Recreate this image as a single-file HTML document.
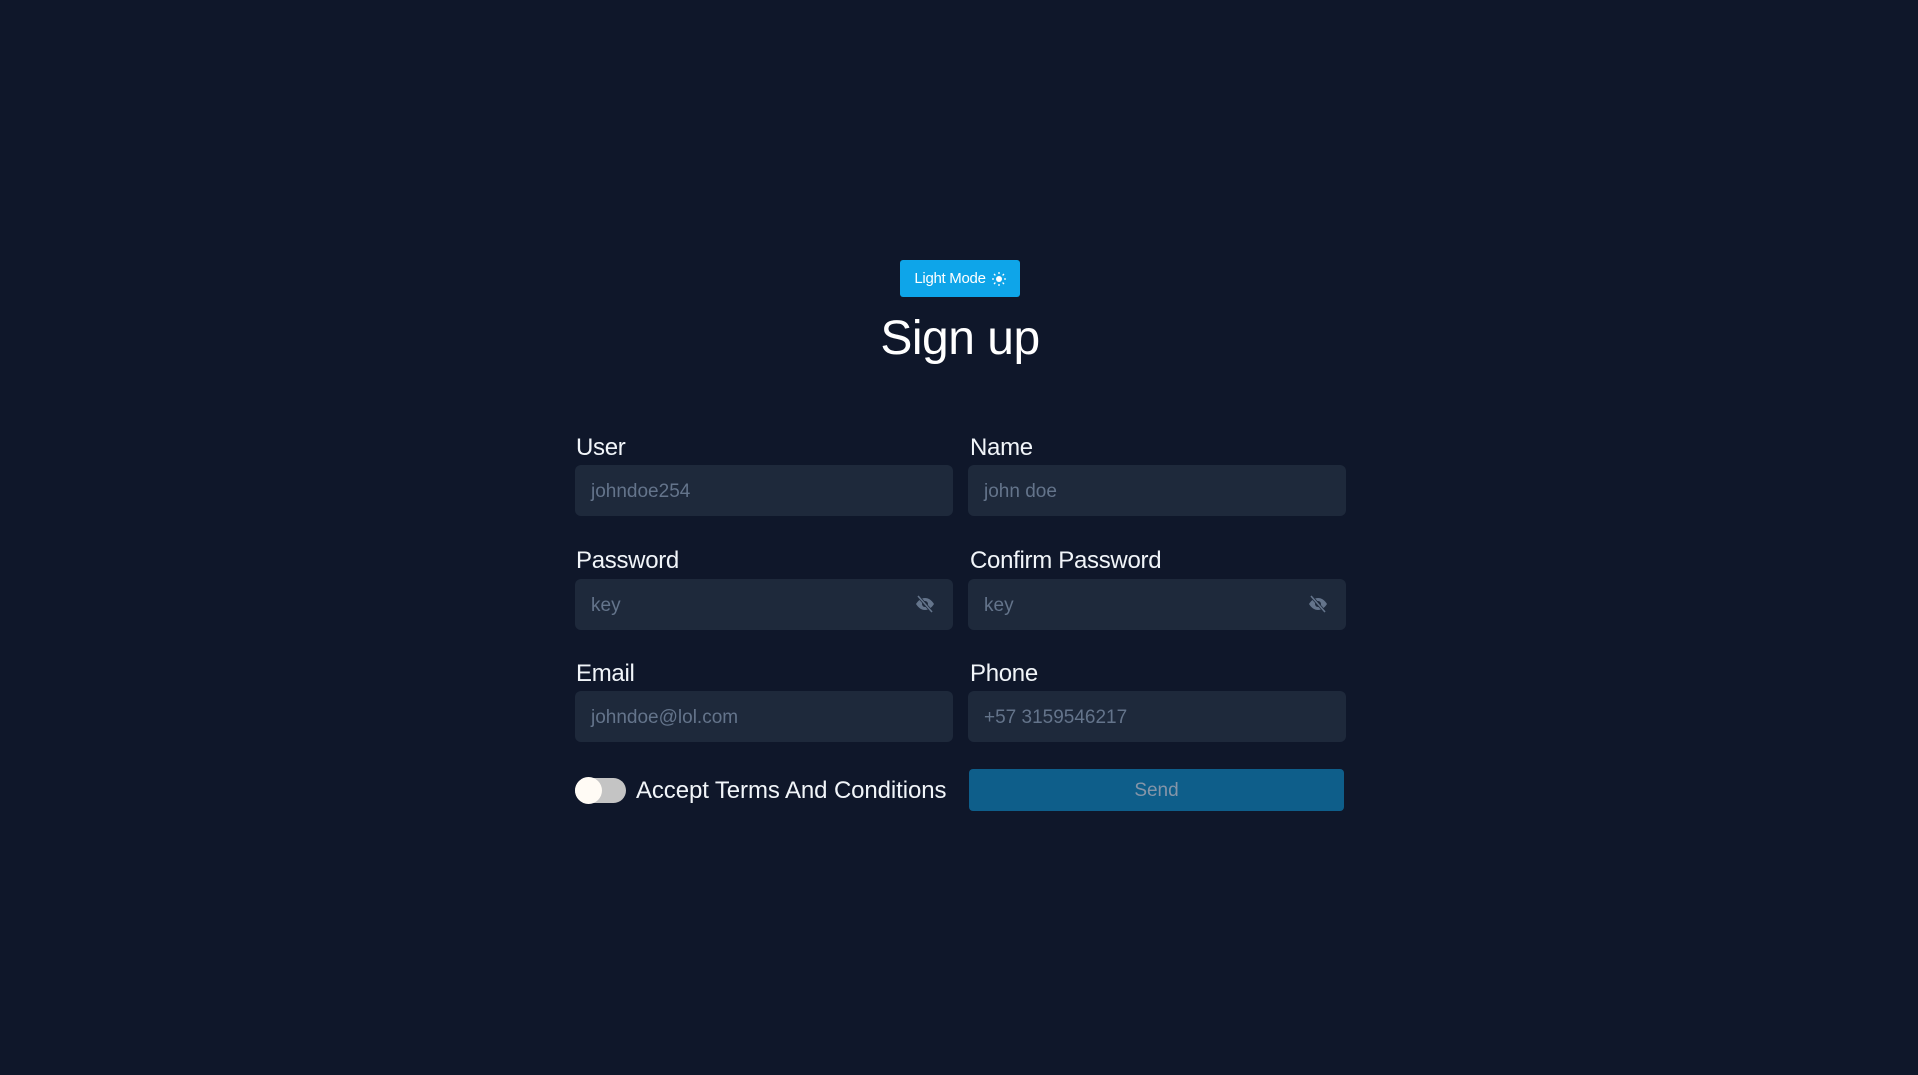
<!DOCTYPE html>
<html><head><meta charset="utf-8"><style>
*{box-sizing:border-box;margin:0;padding:0}
body{width:1918px;height:1075px;background:#0f172a;font-family:"Liberation Sans",sans-serif;position:relative;overflow:hidden;color:#fff}
.abs{position:absolute}
.btn{left:900px;top:260px;width:120px;height:37px;background:#0ea5e9;border-radius:3px;color:#fff;font-size:15px;display:flex;align-items:center;justify-content:center;gap:6px;letter-spacing:-0.3px}
h1{position:absolute;left:0;width:1920px;text-align:center;top:311px;font-size:48px;font-weight:normal;letter-spacing:-0.5px}
.lbl{font-size:24px;color:#f1f5f9;letter-spacing:-0.3px}
.in{background:#1e293b;border-radius:6px;width:378px;height:51px;color:#64748b;font-size:19px;padding-left:16px;display:flex;align-items:center;padding-top:2px}
.eye{position:absolute;right:18px;top:16px}
</style></head><body>
<div class="abs btn">Light Mode <svg width="14" height="14" viewBox="0 0 14 14"><circle cx="7" cy="7" r="3" fill="#fff"/><g stroke="#fff" stroke-width="1.3"><path d="M7 0v2M7 12v2M0 7h2M12 7h2M2 2l1.4 1.4M10.6 10.6L12 12M2 12l1.4-1.4M10.6 3.4L12 2"/></g></svg></div>
<h1>Sign up</h1>
<div class="abs lbl" style="left:576px;top:434px">User</div>
<div class="abs lbl" style="left:970px;top:434px">Name</div>
<div class="abs in" style="left:575px;top:465px">johndoe254</div>
<div class="abs in" style="left:968px;top:465px">john doe</div>
<div class="abs lbl" style="left:576px;top:547px">Password</div>
<div class="abs lbl" style="left:970px;top:547px">Confirm Password</div>
<div class="abs in" style="left:575px;top:579px">key<svg class="eye" width="20" height="18" viewBox="0 0 20 18"><path d="M1 9c2.5-4 5.5-6 9-6s6.5 2 9 6c-2.5 4-5.5 6-9 6S3.5 13 1 9z" fill="#64748b"/><circle cx="10" cy="9" r="3" fill="#1e293b"/><path d="M3 1l14 16" stroke="#1e293b" stroke-width="3"/><path d="M3 1l14 16" stroke="#64748b" stroke-width="1.6"/></svg></div>
<div class="abs in" style="left:968px;top:579px">key<svg class="eye" width="20" height="18" viewBox="0 0 20 18"><path d="M1 9c2.5-4 5.5-6 9-6s6.5 2 9 6c-2.5 4-5.5 6-9 6S3.5 13 1 9z" fill="#64748b"/><circle cx="10" cy="9" r="3" fill="#1e293b"/><path d="M3 1l14 16" stroke="#1e293b" stroke-width="3"/><path d="M3 1l14 16" stroke="#64748b" stroke-width="1.6"/></svg></div>
<div class="abs lbl" style="left:576px;top:660px">Email</div>
<div class="abs lbl" style="left:970px;top:660px">Phone</div>
<div class="abs in" style="left:575px;top:691px">johndoe@lol.com</div>
<div class="abs in" style="left:968px;top:691px">+57 3159546217</div>
<div class="abs" style="left:575px;top:778px;width:51px;height:25px;border-radius:13px;background:#c4c4c4"></div>
<div class="abs" style="left:575px;top:777px;width:27px;height:27px;border-radius:50%;background:#fffbf5"></div>
<div class="abs lbl" style="left:636px;top:777px;letter-spacing:-0.1px">Accept Terms And Conditions</div>
<div class="abs" style="left:969px;top:769px;width:375px;height:42px;background:#0e5e8a;border-radius:4px;color:#8595a8;font-size:19px;display:flex;align-items:center;justify-content:center;padding-top:2px">Send</div>
</body></html>
